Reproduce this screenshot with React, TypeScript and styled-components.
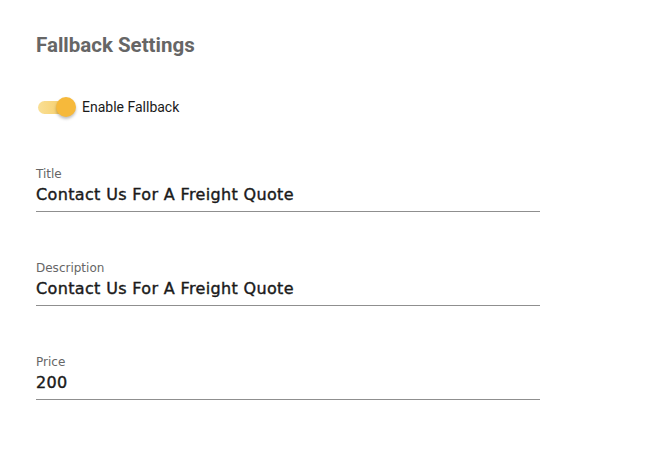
import React from "react";
import styled, { createGlobalStyle } from "styled-components";

const Global = createGlobalStyle`
  html, body { margin: 0; padding: 0; background: #fff; }
  body { font-family: Roboto, "Noto Sans", sans-serif; }
`;

const Page = styled.div`
  padding: 33px 36px 0 36px;
  width: 504px;
`;

const Heading = styled.h2`
  margin: 0;
  font-family: Roboto, sans-serif;
  font-weight: 700;
  font-size: 20.5px;
  line-height: 24px;
  color: #666666;
`;

const ToggleRow = styled.label`
  display: flex;
  align-items: center;
  gap: 10px;
  margin-top: 40px;
  font-family: Roboto, sans-serif;
  font-size: 14px;
  line-height: 20px;
  color: #1a1a1a;
`;

const Track = styled.span`
  position: relative;
  display: inline-block;
  width: 34px;
  height: 13px;
  border-radius: 7px;
  margin-left: 2px;
  background: linear-gradient(90deg, #f9df95, #f6c95c);
`;

const Thumb = styled.span`
  position: absolute;
  top: -3.5px;
  right: -4px;
  width: 20px;
  height: 20px;
  border-radius: 50%;
  background: #f6b93b;
  box-shadow: 0 2px 3px rgba(0, 0, 0, 0.25);
`;

const Fields = styled.div`
  display: flex;
  flex-direction: column;
  gap: 49px;
  margin-top: 50px;
`;

const Field = styled.div`
  display: flex;
  flex-direction: column;
  border-bottom: 1px solid #8f8f8f;
  padding-bottom: 5px;
`;

const Label = styled.span`
  font-family: "DejaVu Sans", sans-serif;
  font-size: 12px;
  line-height: 14px;
  color: #666666;
`;

const Value = styled.span`
  font-family: "DejaVu Sans", sans-serif;
  font-size: 16px;
  letter-spacing: 0.35px;
  line-height: 22px;
  color: #1a1a1a;
  margin-top: 3px;
  -webkit-text-stroke: 0.4px #1a1a1a;
`;

const fields = [
  { label: "Title", value: "Contact Us For A Freight Quote" },
  { label: "Description", value: "Contact Us For A Freight Quote" },
  { label: "Price", value: "200" },
];

export default function App() {
  return (
    <>
      <Global />
      <Page>
        <Heading>Fallback Settings</Heading>
        <ToggleRow>
          <Track>
            <Thumb />
          </Track>
          Enable Fallback
        </ToggleRow>
        <Fields>
          {fields.map((f) => (
            <Field key={f.label}>
              <Label>{f.label}</Label>
              <Value>{f.value}</Value>
            </Field>
          ))}
        </Fields>
      </Page>
    </>
  );
}
